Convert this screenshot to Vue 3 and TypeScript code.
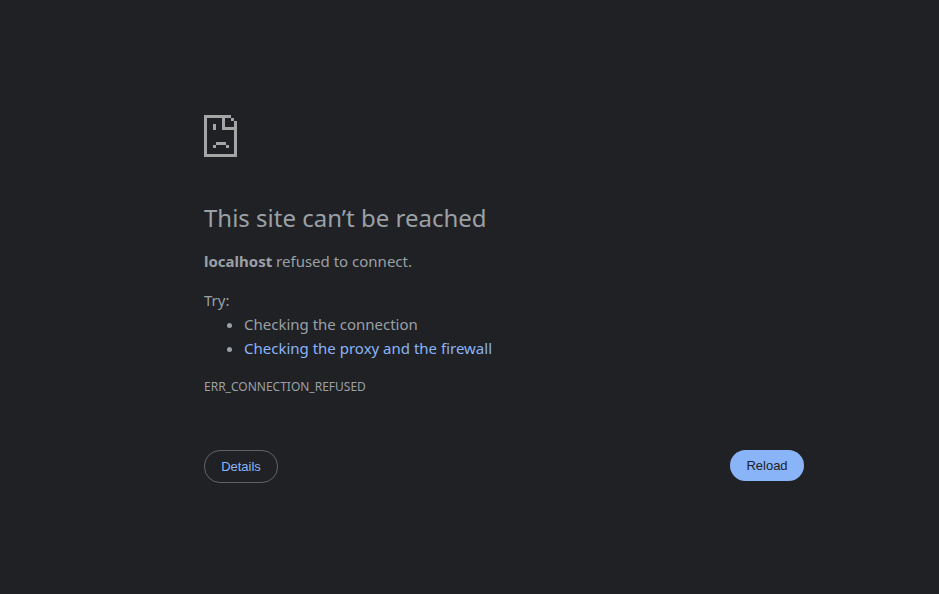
<script setup lang="ts">
const tips: { text: string; link: boolean }[] = [
  { text: 'Checking the connection', link: false },
  { text: 'Checking the proxy and the firewall', link: true },
]
</script>

<template>
  <main class="page">
    <div class="wrapper">
      <svg class="icon" width="33" height="42" viewBox="0 0 33 42" shape-rendering="crispEdges" fill="#a5a5a5" aria-hidden="true">
        <path d="M0 0h27v3h-24v36h27v-24h3v27h-33z" />
        <path d="M18 3h3v9h12v3h-15z" />
        <path d="M27 3h3v3h-3zM30 6h3v6h-3z" />
        <path d="M9 9h3v6h-3z" />
        <path d="M12 27h10v3h-10zM9 30h3v3h-3zM22 30h3v3h-3z" />
      </svg>
      <h1 class="title">This site can’t be reached</h1>
      <p class="summary"><strong>localhost</strong> refused to connect.</p>
      <p class="try">Try:</p>
      <ul class="tips">
        <li v-for="tip in tips" :key="tip.text"><span :class="{ link: tip.link }">{{ tip.text }}</span></li>
      </ul>
      <div class="code">ERR_CONNECTION_REFUSED</div>
      <div class="actions">
        <button class="btn details" type="button">Details</button>
        <button class="btn reload" type="button">Reload</button>
      </div>
    </div>
  </main>
</template>

<style>
html, body { margin: 0; background: #202124; }
</style>

<style scoped>
.page {
  height: 594px;
  box-sizing: border-box;
  padding: 115px 0 0 204px;
  overflow: hidden;
  background: #202124;
  color: #9aa0a6;
  font-family: "Noto Sans", sans-serif;
  font-size: 15px;
  line-height: 24px;
}
.wrapper { width: 600px; }
.icon { display: block; }
.title {
  margin: 46px 0 0;
  font-size: 24px;
  line-height: 30px;
  font-weight: 400;
}
.summary { margin: 16px 0 0; }
.summary strong { font-weight: 700; }
.try { margin: 15px 0 0; }
.tips { margin: 0; padding: 0 0 0 40px; }
.tips li { margin: 0; }
.link { color: #8ab4f8; }
.code {
  margin-top: 15px;
  font-size: 12px;
  line-height: 24px;
}
.actions {
  margin-top: 51px;
  display: flex;
  justify-content: space-between;
  align-items: flex-start;
}
.btn {
  width: 74px;
  box-sizing: border-box;
  padding: 0;
  font-family: "Liberation Sans", Arial, sans-serif;
  font-size: 13px;
  border-radius: 16px;
}
.details {
  height: 33px;
  background: transparent;
  border: 1px solid #5f6368;
  color: #8ab4f8;
}
.reload {
  height: 31px;
  background: #8ab4f8;
  border: 0;
  color: #202124;
}
</style>
